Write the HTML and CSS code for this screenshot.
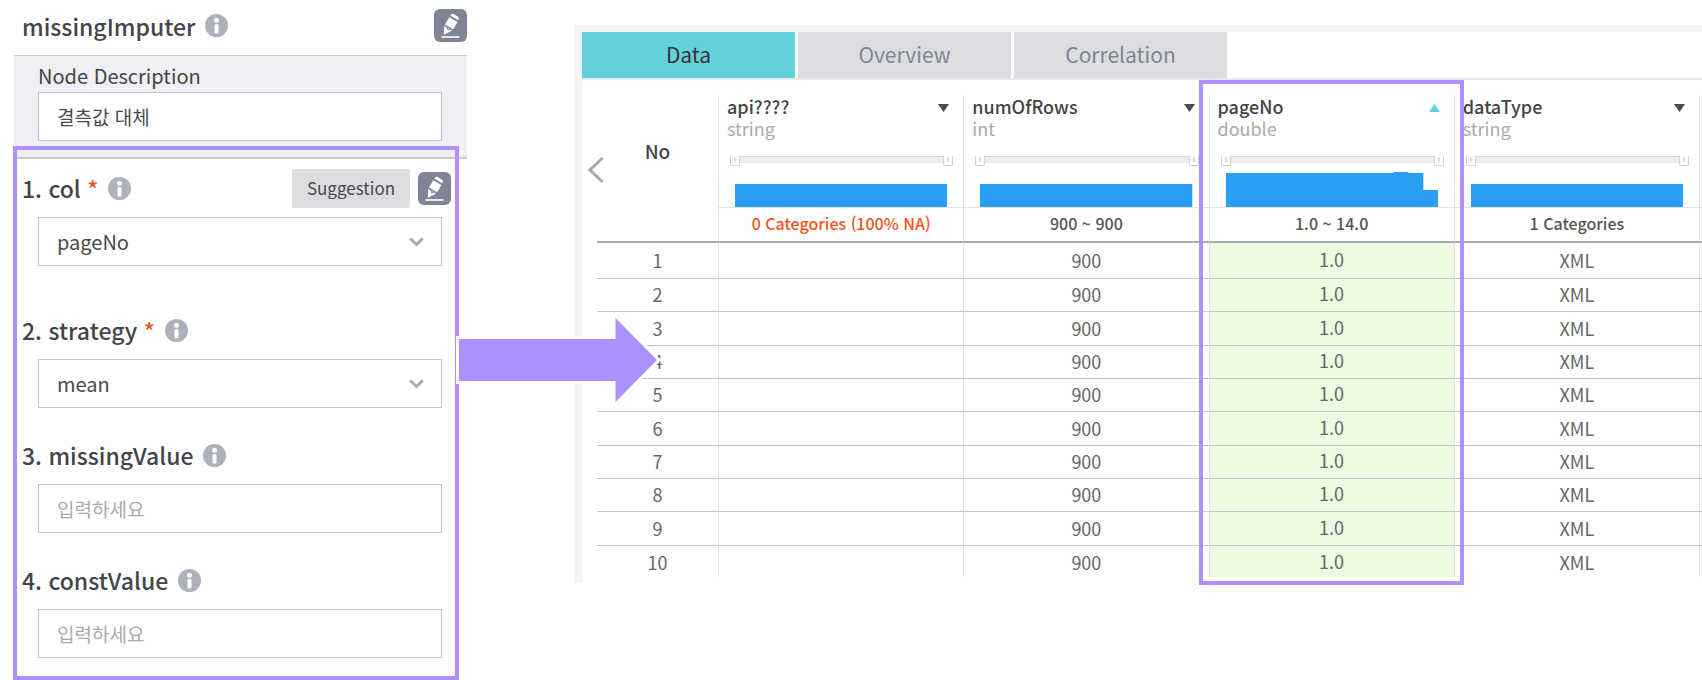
FILE: index.html
```html
<!DOCTYPE html>
<html lang="ko">
<head>
<meta charset="utf-8">
<title>missingImputer</title>
<link rel="stylesheet" href="styles.css">
</head>
<body>
<svg class="defs" aria-hidden="true">
  <symbol id="info" viewBox="0 0 23 23">
    <circle cx="11.5" cy="11.5" r="11.5" fill="#adb1be"/>
    <circle cx="11.5" cy="6.2" r="2.5" fill="#fff"/>
    <rect x="9.5" y="10" width="4" height="9.6" rx="1.6" fill="#fff"/>
  </symbol>
  <symbol id="edit" viewBox="0 0 33 33">
    <rect width="33" height="33" rx="6" fill="#7f8596"/>
    <path d="M17.3 5.4Q18.3 4.4 19.6 5.1L24.3 7.9Q25.3 8.7 24.8 10L24.2 11.3L16.2 6.6Z" fill="#fff"/>
    <path d="M15.3 8.2L23.4 13L19.2 20.3L11 15.5Z" fill="#fff"/>
    <path d="M10.2 17L18.2 21.6L10.4 25.6Q9.9 25.7 9.8 25.2Z" fill="#fff"/>
    <path d="M13 18.2L13.8 21L16.4 20.5" fill="none" stroke="#7f8596" stroke-width="1"/>
    <rect x="7.5" y="27.2" width="18" height="1.6" fill="#fff"/>
  </symbol>
  <symbol id="chevron" viewBox="0 0 15 10">
    <path d="M1.3 1.5L7.5 7.5L13.7 1.5" fill="none" stroke="#aaa" stroke-width="3"/>
  </symbol>
</svg>

<main class="page">
  <form class="settings">
    <header class="settings-head">
      <h1 class="title">missingImputer</h1>
      <svg class="info"><use href="#info"/></svg>
      <button type="button" class="edit" aria-label="Edit name"><svg><use href="#edit"/></svg></button>
    </header>
    <div class="description">
      <label class="description-label" for="desc">Node Description</label>
      <input class="control" id="desc" type="text" value="결측값 대체">
    </div>
    <div class="fields">
      <div class="field field-wide">
        <div class="field-head">
          <label for="col">1. col <span class="required">*</span></label>
          <svg class="info"><use href="#info"/></svg>
          <button type="button" class="suggestion">Suggestion</button>
          <button type="button" class="edit" aria-label="Edit columns"><svg><use href="#edit"/></svg></button>
        </div>
        <div class="select-box">
          <select class="control" id="col"><option>pageNo</option></select>
          <svg class="chevron"><use href="#chevron"/></svg>
        </div>
      </div>
      <div class="field">
        <div class="field-head">
          <label for="strategy">2. strategy <span class="required">*</span></label>
          <svg class="info"><use href="#info"/></svg>
        </div>
        <div class="select-box">
          <select class="control" id="strategy"><option>mean</option></select>
          <svg class="chevron"><use href="#chevron"/></svg>
        </div>
      </div>
      <div class="field">
        <div class="field-head">
          <label for="missing">3. missingValue</label>
          <svg class="info"><use href="#info"/></svg>
        </div>
        <input class="control" id="missing" type="text" placeholder="입력하세요">
      </div>
      <div class="field">
        <div class="field-head">
          <label for="const">4. constValue</label>
          <svg class="info"><use href="#info"/></svg>
        </div>
        <input class="control" id="const" type="text" placeholder="입력하세요">
      </div>
    </div>
    <div class="highlight highlight-form"></div>
    <svg class="arrow" viewBox="0 0 210 96" aria-hidden="true">
      <path d="M6 27H162.500V6L204 48L162.500 90V69H6Z" fill="#fff" stroke="#fff" stroke-width="6"/>
      <path d="M6 27H162.500V6L204 48L162.500 90V69H6Z" fill="#b08fff"/>
    </svg>
  </form>

  <section class="result">
    <nav class="tabs">
      <button type="button" class="tab tab-active">Data</button>
      <button type="button" class="tab">Overview</button>
      <button type="button" class="tab">Correlation</button>
    </nav>
    <div class="grid-area">
      <button type="button" class="prev" aria-label="Previous columns">
        <svg viewBox="0 0 16 26"><path d="M14.500 1L2 13L14.500 25" fill="none" stroke="#aaa" stroke-width="3"/></svg>
      </button>
      <table class="data">
        <colgroup><col class="col-no"><col><col><col><col><col class="col-next"></colgroup>
        <thead>
          <tr class="head-row">
            <th class="no" rowspan="2">No</th>
            <th class="column">
              <div class="name">api????<svg class="sort" viewBox="0 0 11 8"><path d="M0 0H11L5.500 8Z" fill="#4a4a4a"/></svg></div>
              <div class="type">string</div>
              <div class="range"><input type="range" aria-label="api minimum" value="0"><input type="range" aria-label="api maximum" value="100"></div>
              <svg class="chart" viewBox="0 0 213 35" preserveAspectRatio="none"><path d="M0 12H213V35H0Z"/></svg>
            </th>
            <th class="column">
              <div class="name">numOfRows<svg class="sort" viewBox="0 0 11 8"><path d="M0 0H11L5.500 8Z" fill="#4a4a4a"/></svg></div>
              <div class="type">int</div>
              <div class="range"><input type="range" aria-label="numOfRows minimum" value="0"><input type="range" aria-label="numOfRows maximum" value="100"></div>
              <svg class="chart" viewBox="0 0 213 35" preserveAspectRatio="none"><path d="M0 12H213V35H0Z"/></svg>
            </th>
            <th class="column">
              <div class="name">pageNo<svg class="sort" viewBox="0 0 11 8"><path d="M0 8H11L5.500 0Z" fill="#63d1dc"/></svg></div>
              <div class="type">double</div>
              <div class="range"><input type="range" aria-label="pageNo minimum" value="0"><input type="range" aria-label="pageNo maximum" value="100"></div>
              <svg class="chart" viewBox="0 0 213 35" preserveAspectRatio="none"><path d="M0 1H168V0H183V1H198V18H213V35H0Z"/></svg>
            </th>
            <th class="column">
              <div class="name">dataType<svg class="sort" viewBox="0 0 11 8"><path d="M0 0H11L5.500 8Z" fill="#4a4a4a"/></svg></div>
              <div class="type">string</div>
              <div class="range"><input type="range" aria-label="dataType minimum" value="0"><input type="range" aria-label="dataType maximum" value="100"></div>
              <svg class="chart" viewBox="0 0 213 35" preserveAspectRatio="none"><path d="M0 12H213V35H0Z"/></svg>
            </th>
            <th class="column"></th>
          </tr>
          <tr class="summary">
            <td class="warn">0 Categories (100% NA)</td><td>900 ~ 900</td><td>1.0 ~ 14.0</td><td>1 Categories</td><td></td>
          </tr>
        </thead>
        <tbody>
          <tr><td>1</td><td></td><td>900</td><td class="picked">1.0</td><td>XML</td><td></td></tr>
          <tr><td>2</td><td></td><td>900</td><td class="picked">1.0</td><td>XML</td><td></td></tr>
          <tr><td>3</td><td></td><td>900</td><td class="picked">1.0</td><td>XML</td><td></td></tr>
          <tr><td>4</td><td></td><td>900</td><td class="picked">1.0</td><td>XML</td><td></td></tr>
          <tr><td>5</td><td></td><td>900</td><td class="picked">1.0</td><td>XML</td><td></td></tr>
          <tr><td>6</td><td></td><td>900</td><td class="picked">1.0</td><td>XML</td><td></td></tr>
          <tr><td>7</td><td></td><td>900</td><td class="picked">1.0</td><td>XML</td><td></td></tr>
          <tr><td>8</td><td></td><td>900</td><td class="picked">1.0</td><td>XML</td><td></td></tr>
          <tr><td>9</td><td></td><td>900</td><td class="picked">1.0</td><td>XML</td><td></td></tr>
          <tr><td>10</td><td></td><td>900</td><td class="picked">1.0</td><td>XML</td><td></td></tr>
        </tbody>
      </table>
    </div>
    <div class="highlight highlight-column"></div>
  </section>
</main>
</body>
</html>
```

FILE: styles.css
```css
* { box-sizing: border-box; }

body {
  margin: 0;
  background: #fff;
  color: #444;
  font-family: "Noto Sans CJK KR", "Noto Sans", sans-serif;
}

button, input, select { font-family: inherit; margin: 0; }
button { border: 0; padding: 0; cursor: pointer; }
.defs { display: none; }

.page {
  display: flex;
  align-items: flex-start;
  gap: 107px;
  padding-left: 14px;
}

/* Settings form */
.settings {
  position: relative;
  flex: 0 0 453px;
  padding-bottom: 22px;
}

.settings-head {
  display: flex;
  align-items: center;
  height: 56px;
  padding: 0 0 4px 8px;
  border-bottom: 1px solid #ccc;
}

.title, .field-head label {
  margin: 0;
  font-size: 23px;
  line-height: 32px;
  font-weight: 500;
  color: #43454b;
}

.info { width: 23px; height: 23px; margin-left: 10px; }
.required { color: #f0561d; }

.edit {
  width: 33px;
  height: 33px;
  margin-left: 8px;
  background: none;
}
.edit svg { display: block; width: 33px; height: 33px; }
.settings-head .edit { margin-left: auto; }

.description {
  padding: 8px 25px 16px 24px;
  background: #eff0f5;
  border-bottom: 2px solid #ccc;
}

.description-label {
  display: block;
  margin-bottom: 4px;
  font-size: 20px;
  line-height: 24px;
}

.control {
  display: block;
  width: 100%;
  height: 49px;
  padding: 0 18px;
  border: 1px solid #c4c4c4;
  border-radius: 0;
  background: #fff;
  color: #4a4a4a;
  font-size: 20px;
  appearance: none;
}
input.control { font-size: 19px; }
.control::placeholder { color: #aaa; opacity: 1; }

.fields {
  display: flex;
  flex-direction: column;
  gap: 28px;
  padding: 10px 25px 0 24px;
}
.field-wide { margin-bottom: 17px; }

.field-head {
  display: flex;
  align-items: center;
  height: 40px;
  margin: 0 -9px 8px -16px;
  padding-bottom: 2px;
}

.suggestion {
  width: 118px;
  height: 39px;
  margin-left: auto;
  padding-bottom: 1px;
  border-radius: 2px;
  background: #dcdde1;
  color: #4a4a4a;
  font-size: 17px;
}

.select-box { position: relative; }
.chevron {
  position: absolute;
  top: 20px;
  right: 18px;
  width: 15px;
  height: 10px;
  pointer-events: none;
}

/* Annotations over the two panels */
.highlight {
  position: absolute;
  border: 4px solid #b08fff;
  pointer-events: none;
}
.highlight-form { top: 146px; right: 8px; bottom: 0; left: -1px; }
.highlight-column { top: 48px; right: 238px; bottom: -2px; width: 265px; }

.arrow {
  position: absolute;
  top: 312px;
  left: 439px;
  z-index: 2;
  width: 210px;
  height: 96px;
  pointer-events: none;
}

/* Result panel */
.result {
  position: relative;
  flex: 1;
  min-width: 0;
  margin-top: 25px;
  padding-bottom: 6px;
  border-top: 7px solid #f4f4f4;
  border-left: 8px solid #f4f4f4;
}

.tabs {
  display: flex;
  gap: 3px;
  border-bottom: 2px solid #e8e8ea;
}
.tab {
  width: 213px;
  height: 46px;
  padding-bottom: 2px;
  background: #dcdde1;
  color: #7f8596;
  font-size: 21px;
}
.tab-active { background: #63d1dc; color: #333; }

.grid-area {
  display: flex;
  align-items: flex-start;
  padding-top: 15px;
}

.prev {
  flex: 0 0 15px;
  min-width: 0;
  padding-top: 62px;
  background: none;
}
.prev svg { display: block; width: 16px; height: 26px; margin-left: 6px; }

.data {
  flex: 1;
  min-width: 0;
  table-layout: fixed;
  border-spacing: 0;
  font-size: 18px;
}
.col-no { width: 121px; }
.col-next { width: 3px; }

.data th, .data td {
  padding: 0;
  border-left: 1px solid #e2e2e2;
  font-weight: 400;
}
.data th.no, .data tbody td:first-child { border-left: 0; }

.data .no {
  padding-top: 43px;
  border-bottom: 2px solid #aaa;
  vertical-align: top;
  font-size: 19px;
  line-height: 26px;
  font-weight: 500;
}

.head-row { height: 113px; }
.data .column {
  border-bottom: 1px solid #e2e2e2;
  vertical-align: top;
  text-align: left;
}

.name {
  display: flex;
  justify-content: space-between;
  align-items: center;
  padding: 0 14px 0 8px;
  font-size: 18px;
  line-height: 22px;
  font-weight: 500;
}
.sort { width: 11px; height: 8px; margin-top: 4px; }

.type {
  padding-left: 8px;
  color: #aaa;
  font-size: 18px;
  line-height: 23px;
}

.range {
  position: relative;
  height: 10px;
  margin: 16px 10px 0 11px;
}
.range::before {
  content: "";
  position: absolute;
  inset: 0 5px 3px;
  border-top: 1px solid #d8d8d8;
  background: #ececec;
}
.range input {
  position: absolute;
  inset: 0;
  width: 100%;
  height: 10px;
  appearance: none;
  background: none;
  pointer-events: none;
}
.range input::-webkit-slider-thumb {
  appearance: none;
  width: 10px;
  height: 10px;
  border: 1px solid #d4d4d4;
  border-top: 0;
  border-radius: 0 0 2px 2px;
  background: linear-gradient(#ddd, #ddd) center 1px / 2px 5px no-repeat #fff;
  pointer-events: auto;
}

.chart {
  display: block;
  width: calc(100% - 32px);
  height: 35px;
  margin: 6px 0 0 16px;
  fill: #289ff2;
}

.summary { height: 35px; }
.data .summary td {
  padding-bottom: 3px;
  border-bottom: 2px solid #aaa;
  text-align: center;
  color: #555;
  font-size: 16px;
  font-weight: 500;
  line-height: 24px;
}
.data .summary .warn { color: #f0561d; }

.data tbody tr { height: 33px; }
.data tbody tr:nth-child(3n) { height: 34px; }
.data tbody tr:first-child { height: 36px; }
.data tbody tr:last-child { height: 31px; }
.data tbody td {
  padding-bottom: 2px;
  border-bottom: 1px solid #c4c4c4;
  color: #666;
  text-align: center;
  line-height: 24px;
}
.data tbody .picked { padding-bottom: 4px; background: #ebfce2; }
.data tbody tr:last-child td { padding-bottom: 0; border-bottom: 0; }
.data tbody tr:last-child .picked { padding-bottom: 2px; }
```
